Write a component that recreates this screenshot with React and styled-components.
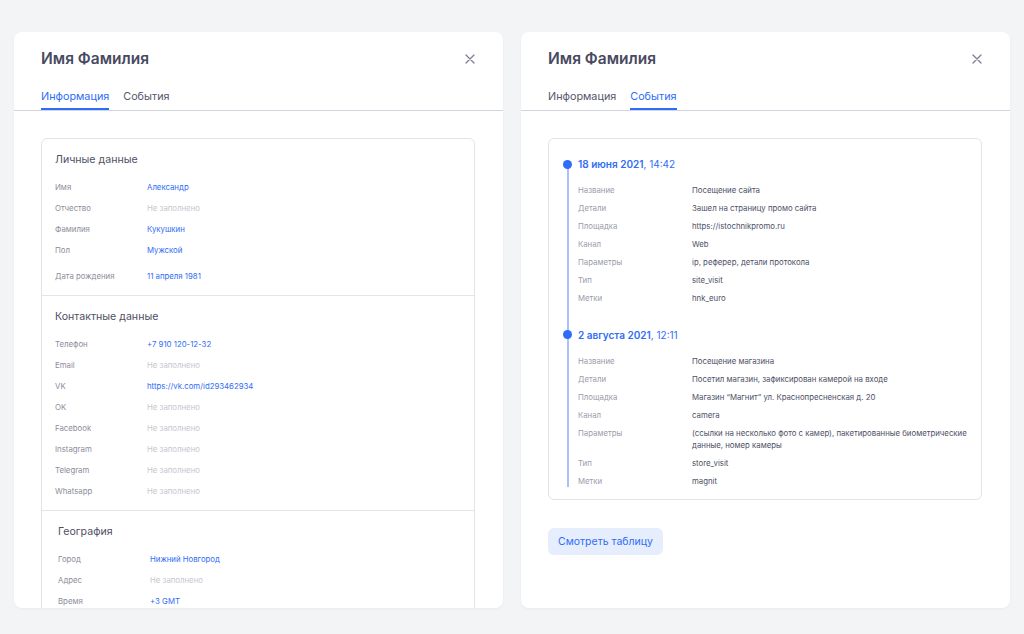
import React from 'react';
import styled, { createGlobalStyle } from 'styled-components';

const GlobalStyle = createGlobalStyle`
  html, body {
    margin: 0;
    padding: 0;
    background: #f3f4f5;
    font-family: Inter, "Noto Sans", "Liberation Sans", sans-serif;
    overflow: hidden;
  }
  * { box-sizing: border-box; }
`

const Page = styled.div`
  display: flex;
  gap: 18px;
  padding: 32px 14px 26px 14px;
  height: 634px;
`

const Panel = styled.div`
  flex: 1;
  height: 576px;
  background: #fff;
  border-radius: 8px;
  overflow: hidden;
  display: flex;
  flex-direction: column;
  box-shadow: 0 1px 3px rgba(30, 35, 60, 0.04);
`

const Header = styled.div`
  display: flex;
  align-items: center;
  justify-content: space-between;
  padding: 17px 28px 0 27px;
`

const Title = styled.h1`
  margin: 0;
  font-size: 15.5px;
  line-height: 20px;
  font-weight: 600;
  color: #484a5f;
`

const Close = styled.button`
  border: 0;
  background: none;
  padding: 0;
  width: 10px;
  height: 10px;
  display: flex;
  cursor: pointer;
`

const Tabs = styled.div`
  display: flex;
  gap: 14px;
  margin-top: 20px;
  padding: 0 27px;
  border-bottom: 1px solid #d3d5de;
`

const Tab = styled.div`
  font-size: 10.8px;
  line-height: 16px;
  padding-bottom: 3px;
  color: ${p => (p.active ? '#2f6df6' : '#55576b')};
  border-bottom: 2px solid ${p => (p.active ? '#2f6df6' : 'transparent')};
`

const Body = styled.div`
  padding: 27px 28px 0 27px;
`

const Card = styled.div`
  border: 1px solid #e2e3e8;
  border-radius: 6px;
`

const Section = styled.section`
  padding: 13px 14px 8.5px ${p => 13 + (p.indent || 0)}px;
  & + & {
    border-top: 1px solid #e4e5ea;
  }
`

const SectionTitle = styled.h2`
  margin: 0 0 8.5px;
  font-size: 10.6px;
  line-height: 16px;
  font-weight: 400;
  color: #4f5064;
`

const InfoRow = styled.div`
  display: grid;
  grid-template-columns: 92px 1fr;
  font-size: 7.8px;
  line-height: 12px;
  padding: 4.5px 0;
  margin-top: ${p => (p.spaced ? '5px' : '0')};
`

const InfoLabel = styled.span`
  color: #8c8d9c;
`

const InfoValue = styled.span`
  color: ${p => (p.empty ? '#c6c7d0' : '#2f6df6')};
`

const EventsCard = styled(Card)`
  padding: 18px 8px 9px 17px;
`

const Timeline = styled.div`
  position: relative;
  &::before {
    content: '';
    position: absolute;
    left: 1px;
    top: 7px;
    bottom: 3px;
    width: 1.5px;
    background: #a9c0fb;
  }
`

const Event = styled.div`
  padding-left: 12px;
  & + & {
    margin-top: 20.5px;
  }
`

const EventDate = styled.div`
  position: relative;
  font-size: 10px;
  line-height: 14px;
  color: #2f6df6;
  margin-bottom: 10px;
  b { font-weight: 600; }
  &::before {
    content: '';
    position: absolute;
    left: -15.5px;
    top: 2.5px;
    width: 9px;
    height: 9px;
    border-radius: 50%;
    background: #2f6df6;
  }
`

const EventRow = styled.div`
  display: grid;
  grid-template-columns: 114px 1fr;
  font-size: 7.8px;
  line-height: 12px;
  padding: 3px 0;
`

const EventLabel = styled.span`
  color: #9b9cab;
`

const EventValue = styled.span`
  color: #4e5066;
  white-space: pre;
`

const TableButton = styled.button`
  margin-top: 28px;
  height: 27px;
  width: 115px;
  border: 0;
  border-radius: 6px;
  background: #e6edfc;
  color: #2f6df6;
  font-family: inherit;
  font-size: 10.5px;
  cursor: pointer;
  padding: 0;
`

function CloseIcon() {
  return (
    <Close aria-label="Закрыть">
      <svg width="10" height="10" viewBox="0 0 10 10">
        <path d="M1 1L9 9M9 1L1 9" stroke="#7d7f93" strokeWidth="1.3" strokeLinecap="round" />
      </svg>
    </Close>
  )
}

const personal = [
  ['Имя', 'Александр'],
  ['Отчество', null],
  ['Фамилия', 'Кукушкин'],
  ['Пол', 'Мужской'],
  ['Дата рождения', '11 апреля 1981', true],
]

const contacts = [
  ['Телефон', '+7 910 120-12-32'],
  ['Email', null],
  ['VK', 'https://vk.com/id293462934'],
  ['OK', null],
  ['Facebook', null],
  ['Instagram', null],
  ['Telegram', null],
  ['Whatsapp', null],
]

const geo = [
  ['Город', 'Нижний Новгород'],
  ['Адрес', null],
  ['Время', '+3 GMT'],
]

const events = [
  {
    date: '18 июня 2021',
    time: '14:42',
    rows: [
      ['Название', 'Посещение сайта'],
      ['Детали', 'Зашел на страницу промо сайта'],
      ['Площадка', 'https://istochnikpromo.ru'],
      ['Канал', 'Web'],
      ['Параметры', 'ip, реферер, детали протокола'],
      ['Тип', 'site_visit'],
      ['Метки', 'hnk_euro'],
    ],
  },
  {
    date: '2 августа 2021',
    time: '12:11',
    rows: [
      ['Название', 'Посещение магазина'],
      ['Детали', 'Посетил магазин, зафиксирован камерой на входе'],
      ['Площадка', 'Магазин “Магнит” ул. Краснопресненская д. 20'],
      ['Канал', 'camera'],
      ['Параметры', '(ссылки на несколько фото с камер), пакетированные биометрические\nданные, номер камеры'],
      ['Тип', 'store_visit'],
      ['Метки', 'magnit'],
    ],
  },
]

function InfoSection({ title, rows, indent }) {
  return (
    <Section indent={indent}>
      <SectionTitle>{title}</SectionTitle>
      {rows.map(([label, value, spaced]) => (
        <InfoRow key={label} spaced={spaced}>
          <InfoLabel>{label}</InfoLabel>
          <InfoValue empty={!value}>{value || 'Не заполнено'}</InfoValue>
        </InfoRow>
      ))}
    </Section>
  )
}

function PanelHead({ active }) {
  return (
    <>
      <Header>
        <Title>Имя Фамилия</Title>
        <CloseIcon />
      </Header>
      <Tabs>
        <Tab active={active === 'info'}>Информация</Tab>
        <Tab active={active === 'events'}>События</Tab>
      </Tabs>
    </>
  )
}

export default function App() {
  return (
    <Page>
      <GlobalStyle />
      <Panel>
        <PanelHead active="info" />
        <Body>
          <Card>
            <InfoSection title="Личные данные" rows={personal} />
            <InfoSection title="Контактные данные" rows={contacts} />
            <InfoSection title="География" rows={geo} indent={3} />
          </Card>
        </Body>
      </Panel>
      <Panel>
        <PanelHead active="events" />
        <Body>
          <EventsCard>
            <Timeline>
              {events.map(ev => (
                <Event key={ev.date}>
                  <EventDate>
                    <b>{ev.date}</b>, {ev.time}
                  </EventDate>
                  {ev.rows.map(([label, value]) => (
                    <EventRow key={label}>
                      <EventLabel>{label}</EventLabel>
                      <EventValue>{value}</EventValue>
                    </EventRow>
                  ))}
                </Event>
              ))}
            </Timeline>
          </EventsCard>
          <TableButton>Смотреть таблицу</TableButton>
        </Body>
      </Panel>
    </Page>
  )
}
